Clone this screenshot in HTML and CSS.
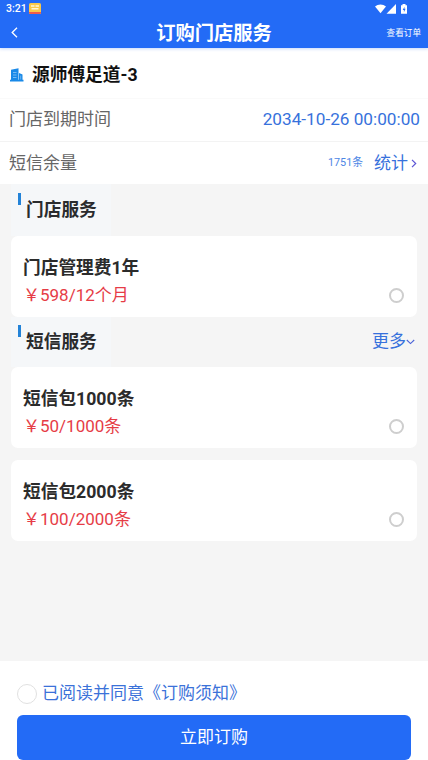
FILE: index.html
```html
<!DOCTYPE html>
<html lang="zh-CN">
<head>
<meta charset="utf-8">
<title>订购门店服务</title>
<link rel="stylesheet" href="styles.css">
</head>
<body>
<div class="page">
  <header class="header">
    <div class="status">
      <span class="clock">3:21</span>
      <svg class="notice" width="12" height="11" viewBox="0 0 12 11"><rect width="12" height="11" rx="1.5" fill="#f9c84a"/><path d="M0 9h12v.5a1.5 1.5 0 0 1-1.5 1.5h-9A1.5 1.5 0 0 1 0 9.500z" fill="#ef5a4c"/><path d="M2 3h3.500M6.500 3H10M2.500 5.800h7" stroke="#fff6d8" stroke-width="1.500"/></svg>
      <svg class="signals" width="34" height="11" viewBox="0 0 34 11" fill="#fff"><path d="M0 2.600C3-.2 8-.2 11 2.600L5.500 9.300z"/><path d="M21 0v9.700h-9.500z"/><path d="M27.500 0h3v1.200H32v8.600h-6V1.200h1.500z"/><path d="M29.500 2.700 27.700 6h1.200v2.300l1.700-3.500h-1.200z" fill="#236bf6"/></svg>
    </div>
    <nav class="nav">
      <svg class="back" width="7" height="11" viewBox="0 0 7 11"><path d="M6 .8 1.200 5.500 6 10.200" fill="none" stroke="#fff" stroke-width="1.300"/></svg>
      <h1>订购门店服务</h1>
      <a class="orders">查看订单</a>
    </nav>
  </header>
  <section class="store">
    <svg width="14" height="14" viewBox="0 0 14 14"><path d="M1 1.800 8.500.3v11.400H9V5l3.500 1.400v5.300h1V13.500H0v-1.800h1z" fill="#1989e8"/><path d="M3 4.500h3.500M3 7h3.500M3 9.500h3.500" stroke="#8cc8f7" stroke-width=".8"/><path d="M10.700 7.500v4" stroke="#8cc8f7" stroke-width=".7"/></svg>
    <strong>源师傅足道-3</strong>
  </section>
  <section class="row expiry"><span>门店到期时间</span><span class="date">2034-10-26 00:00:00</span></section>
  <section class="row balance">
    <span>短信余量</span><span class="count">1751条</span><a class="stats">统计</a>
    <svg width="6" height="9" viewBox="0 0 6 9"><path d="M1 .8 4.700 4.500 1 8.200" fill="none" stroke="#5c55d5" stroke-width="1.200"/></svg>
  </section>
  <main class="services">
    <div class="heading"><h2>门店服务</h2></div>
    <article class="card"><div><h3>门店管理费1年</h3><p>￥598/12个月</p></div><i class="radio"></i></article>
    <div class="heading second"><h2>短信服务</h2>
      <a class="more">更多<svg width="9" height="6" viewBox="0 0 9 6"><path d="M.8 1 4.500 4.600 8.200 1" fill="none" stroke="#4a63d8" stroke-width="1.100"/></svg></a>
    </div>
    <article class="card"><div><h3>短信包1000条</h3><p>￥50/1000条</p></div><i class="radio"></i></article>
    <article class="card last"><div><h3>短信包2000条</h3><p>￥100/2000条</p></div><i class="radio"></i></article>
  </main>
  <footer class="footer">
    <label class="agree"><i class="check"></i><span>已阅读并同意《订购须知》</span></label>
    <button class="buy">立即订购</button>
  </footer>
</div>
</body>
</html>
```
FILE: styles.css
```css
* { box-sizing: border-box; }
body { margin: 0; background: #fff; font-family: Roboto, "Noto Sans CJK SC", sans-serif; }
h1, h2, h3, p { margin: 0; }
i { flex: none; }
svg { display: block; flex: none; }
.page { width: 428px; height: 760px; overflow: hidden; display: flex; flex-direction: column; }
.header { height: 48px; flex: none; background: #236bf6; color: #fff; box-shadow: 0 1px 3px #236bf640; }
.status { height: 18px; display: flex; align-items: center; padding: 0 19px 0 6px; }
.clock { font-size: 10.5px; font-weight: 500; width: 23px; line-height: 18px; }
.notice { margin-top: -2px; }
.signals { margin: 0 0 0 auto; width: 34px; }
.nav { height: 30px; display: grid; grid-template-columns: 98px 1fr 102px; align-items: center; padding: 0 7px 0 11px; }
.nav .back { margin-top: -2px; }
.nav h1 { font-size: 19.3px; line-height: 30px; padding-top: 1px; font-weight: 700; text-align: center; }
.orders { font-size: 8.6px; text-align: right; margin-top: -3px; }
.store { height: 51px; flex: none; display: flex; align-items: center; gap: 8px; padding: 3px 10px 0 10px; border-bottom: 1px solid #fafafa; color: #111; }
.store strong { font-size: 17.7px; line-height: 26px; font-weight: 700; }
.row { flex: none; display: flex; align-items: center; padding: 0 8px 0 9px; color: #666; font-size: 17px; line-height: 26px; }
.expiry { height: 43px; padding-bottom: 2px; border-bottom: 1px solid #f3f3f3; justify-content: space-between; }
.balance { height: 42px; padding-right: 11px; }
.date { color: #3771dc; font-size: 17.2px; }
.count { margin-left: auto; color: #4d86e5; font-size: 10.8px; }
.stats { margin: 0 3px 0 11px; color: #3771dc; }
.services { height: 477px; flex: none; background: #f5f5f5; padding: 0 11px; }
.heading { height: 52px; display: flex; justify-content: space-between; }
.heading h2 { width: 100px; padding: 13px 0 0 15px; font-size: 17.7px; line-height: 27px; font-weight: 700; color: #2a2b2d; background: linear-gradient(#2383d8, #2383d8) 7px 9px / 3px 12px no-repeat #f5f7f9; }
.second { height: 50px; }
.second h2 { padding-top: 12px; background-position: 7px 8px; }
.more { display: flex; align-items: center; color: #3771dc; font-size: 17px; line-height: 26px; height: 26px; margin: 11px 2px 0 0; }
.more svg { margin-top: 2px; }
.card { height: 81px; border-radius: 7px; background: #fff; padding: 18px 13px 0 12px; display: flex; justify-content: space-between; }
.card.last { margin-top: 12px; }
.card h3 { color: #2b2b2b; font-size: 17.7px; line-height: 28px; font-weight: 700; }
.card p { color: #e63c46; font-size: 17px; line-height: 27px; }
.radio { width: 15px; height: 15px; margin-top: 34px; border: 2px solid #cecece; border-radius: 50%; }
.footer { flex: 1; padding: 19px 17px 0; background: #fff; }
.agree { height: 35px; display: flex; align-items: flex-start; gap: 5px; color: #3b72d9; font-size: 17px; line-height: 27px; }
.check { width: 20px; height: 20px; margin-top: 4px; border: 1px solid #e1e1e1; border-radius: 50%; }
.buy { display: block; width: 394px; height: 45px; border: 0; border-radius: 6px; background: #236bf6; color: #fff; font: 17px/45px Roboto, "Noto Sans CJK SC", sans-serif; padding: 0; }
```
